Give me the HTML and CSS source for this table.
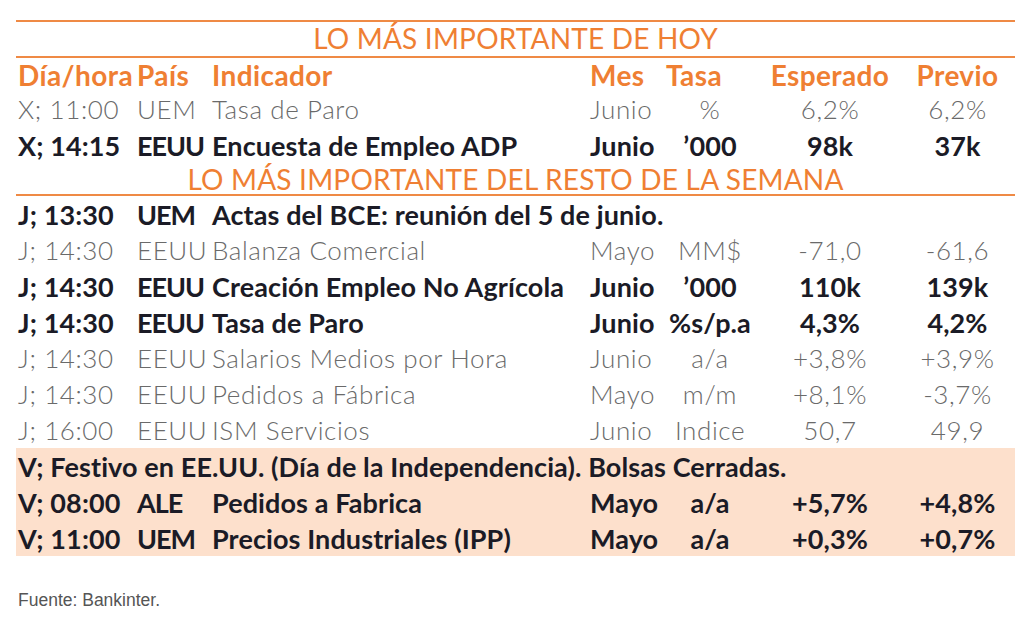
FILE: index.html
```html
<!DOCTYPE html>
<html lang="es">
<head>
<meta charset="utf-8">
<title>Agenda</title>
<link rel="stylesheet" href="styles.css">
</head>
<body>
<div class="agenda">
  <div class="sec-title first">LO MÁS IMPORTANTE DE HOY</div>
  <div class="row head">
    <div>Día/hora</div><div>País</div><div>Indicador</div><div>Mes</div><div class="tasa-h">Tasa</div><div class="c">Esperado</div><div class="c">Previo</div>
  </div>
  <div class="row light">
    <div>X; 11:00</div><div>UEM</div><div>Tasa de Paro</div><div>Junio</div><div class="c">%</div><div class="c">6,2%</div><div class="c">6,2%</div>
  </div>
  <div class="row bold">
    <div>X; 14:15</div><div class="pais">EEUU</div><div>Encuesta de Empleo ADP</div><div>Junio</div><div class="c">’000</div><div class="c">98k</div><div class="c">37k</div>
  </div>
  <div class="sec-title second">LO MÁS IMPORTANTE DEL RESTO DE LA SEMANA</div>
  <div class="row bold">
    <div>J; 13:30</div><div class="pais">UEM</div><div class="span">Actas del BCE: reunión del 5 de junio.</div>
  </div>
  <div class="row light">
    <div>J; 14:30</div><div>EEUU</div><div>Balanza Comercial</div><div>Mayo</div><div class="c">MM$</div><div class="c">-71,0</div><div class="c">-61,6</div>
  </div>
  <div class="row bold">
    <div>J; 14:30</div><div class="pais">EEUU</div><div>Creación Empleo No Agrícola</div><div>Junio</div><div class="c">’000</div><div class="c">110k</div><div class="c">139k</div>
  </div>
  <div class="row bold">
    <div>J; 14:30</div><div class="pais">EEUU</div><div>Tasa de Paro</div><div>Junio</div><div class="c">%s/p.a</div><div class="c">4,3%</div><div class="c">4,2%</div>
  </div>
  <div class="row light">
    <div>J; 14:30</div><div>EEUU</div><div>Salarios Medios por Hora</div><div>Junio</div><div class="c">a/a</div><div class="c">+3,8%</div><div class="c">+3,9%</div>
  </div>
  <div class="row light">
    <div>J; 14:30</div><div>EEUU</div><div>Pedidos a Fábrica</div><div>Mayo</div><div class="c">m/m</div><div class="c">+8,1%</div><div class="c">-3,7%</div>
  </div>
  <div class="row light">
    <div>J; 16:00</div><div>EEUU</div><div>ISM Servicios</div><div>Junio</div><div class="c">Indice</div><div class="c">50,7</div><div class="c">49,9</div>
  </div>
  <div class="hl">
    <div class="row bold">
      <div class="full">V; Festivo en EE.UU. (Día de la Independencia). Bolsas Cerradas.</div>
    </div>
    <div class="row bold">
      <div>V; 08:00</div><div class="pais">ALE</div><div>Pedidos a Fabrica</div><div>Mayo</div><div class="c">a/a</div><div class="c">+5,7%</div><div class="c">+4,8%</div>
    </div>
    <div class="row bold">
      <div>V; 11:00</div><div class="pais">UEM</div><div>Precios Industriales (IPP)</div><div>Mayo</div><div class="c">a/a</div><div class="c">+0,3%</div><div class="c">+0,7%</div>
    </div>
  </div>
</div>
<p class="source">Fuente: Bankinter.</p>
</body>
</html>
```

FILE: styles.css
```css
html, body {
  margin: 0;
  padding: 0;
  background: #ffffff;
}

.agenda {
  margin: 20px 0 0 16px;
  width: 999px;
  font-family: Lato, "Open Sans", sans-serif;
}

.sec-title {
  color: #ef7f33;
  font-size: 28px;
  font-weight: 400;
  letter-spacing: 0.2px;
  text-align: center;
  border-bottom: 2px solid #ef8a45;
}

.sec-title.first {
  border-top: 2px solid #ef8a45;
  height: 34px;
  line-height: 33px;
}

.sec-title.second {
  height: 31px;
  line-height: 32px;
}

.row {
  display: grid;
  grid-template-columns: 119px 75px 378px 72px 100px 140px 115px;
  align-items: center;
  height: 36px;
  font-size: 26px;
  white-space: nowrap;
}

.row > div {
  padding-left: 2px;
}

.row > .c {
  padding-left: 0;
  text-align: center;
}

.row.head {
  height: 33px;
  color: #ef7f33;
  font-size: 28px;
  font-weight: 700;
  letter-spacing: 0.4px;
  line-height: 30px;
}

.row.head > .tasa-h {
  padding-left: 6px;
}

.row.light {
  color: #6a6a6a;
  font-weight: 300;
  letter-spacing: 0.6px;
}

.row.bold {
  color: #1b1b26;
  font-size: 27px;
  font-weight: 700;
  letter-spacing: 0.1px;
}

.row.bold > .pais {
  letter-spacing: -1px;
}

.row > .span {
  grid-column: 3 / -1;
}

.row > .full {
  grid-column: 1 / -1;
}

.hl {
  background: #fde0cc;
}

.source {
  margin: 34px 0 0 18px;
  font-family: "Liberation Sans", Arial, sans-serif;
  font-size: 17.5px;
  color: #555555;
}
```
